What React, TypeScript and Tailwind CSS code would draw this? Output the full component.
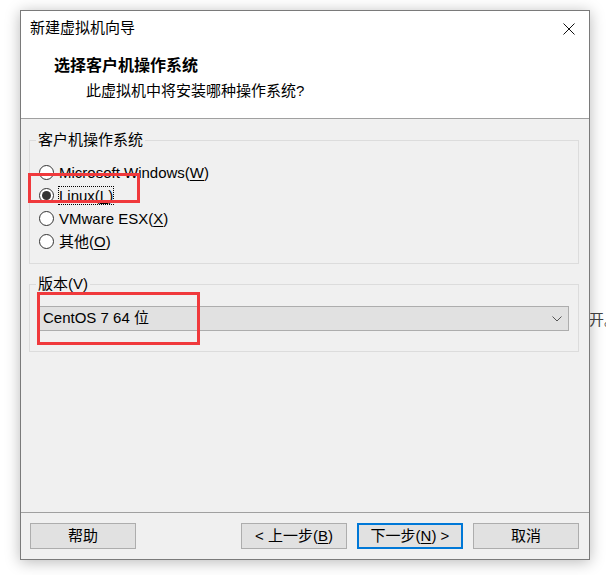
import { useState } from "react"

const font = { fontFamily: '"Liberation Sans", "Noto Sans CJK SC", sans-serif' }

function Radio({ checked, label, hot, focused }: { checked?: boolean; label: string; hot: string; focused?: boolean }) {
  return (
    <div className="flex items-center h-[23px] pl-[9px]">
      <span className="w-[15px] h-[15px] rounded-full border border-[#333333] bg-white flex items-center justify-center shrink-0">
        {checked && <span className="w-[9px] h-[9px] rounded-full bg-[#333333]" />}
      </span>
      <span
        className={`ml-[4px] leading-[17px] border border-dotted ${focused ? "border-black" : "border-transparent"}`}
      >
        {label}(<span className="underline underline-offset-2">{hot}</span>)
      </span>
    </div>
  )
}

function Button({ children, primary }: { children: React.ReactNode; primary?: boolean }) {
  return (
    <button
      className={`w-[106px] h-[26px] bg-[#e1e1e1] flex items-center justify-center text-[15px] text-black ${
        primary ? "border-2 border-[#0078d7]" : "border border-[#adadad]"
      }`}
    >
      {children}
    </button>
  )
}

export default function App() {
  const [os, setOs] = useState("linux")
  void setOs

  return (
    <div className="relative w-[606px] h-[575px] bg-white overflow-hidden text-black text-[15px]" style={font}>
      {/* text from the window behind */}
      <div className="absolute left-[589px] top-[310px] text-[15px] leading-[20px] text-[#444] whitespace-nowrap">开。</div>

      <div className="relative z-10 ml-[20px] mt-[10px] w-[570px] h-[550px] border border-[#7a7a7a] bg-[#f0f0f0] flex flex-col shadow-[0_2px_14px_rgba(0,0,0,0.28)]">
        {/* title bar + header */}
        <div className="bg-white">
          <div className="h-[35px] flex items-center justify-between pl-[9px] pr-[14px]">
            <span className="text-[15px]">新建虚拟机向导</span>
            <svg width="12" height="12" viewBox="0 0 12 12">
              <path d="M0.5 0.5 L11.5 11.5 M11.5 0.5 L0.5 11.5" stroke="#111" strokeWidth="1" fill="none" />
            </svg>
          </div>
          <div className="h-[72px] pt-[10px]">
            <div className="pl-[33px] text-[16px] font-bold leading-[20px]">选择客户机操作系统</div>
            <div className="pl-[65px] mt-[5px] leading-[20px]">此虚拟机中将安装哪种操作系统?</div>
          </div>
        </div>
        <div className="h-px bg-[#a0a0a0]" />

        {/* body */}
        <div className="flex-1 flex flex-col pl-[8px] pr-[10px] pt-[11px]">
          <fieldset className="border border-[#dcdcdc] pt-[11px] pb-[10px]">
            <legend className="ml-[6px] px-[2px] leading-[20px]">客户机操作系统</legend>
            <Radio label="Microsoft Windows" hot="W" checked={os === "windows"} />
            <Radio label="Linux" hot="L" checked={os === "linux"} focused />
            <Radio label="VMware ESX" hot="X" checked={os === "esx"} />
            <Radio label="其他" hot="O" checked={os === "other"} />
          </fieldset>

          <fieldset className="mt-[10px] border border-[#dcdcdc] pt-[12px] pb-[20px] pl-[9px] pr-[9px]">
            <legend className="ml-[-3px] px-[2px] leading-[20px]">版本(V)</legend>
            <div className="h-[25px] bg-[#e1e1e1] border border-[#adadad] flex items-center justify-between pl-[3px] pr-[6px]">
              <span>CentOS 7 64 位</span>
              <svg width="10" height="6" viewBox="0 0 10 6">
                <path d="M0.5 0.5 L5 5 L9.5 0.5" stroke="#555" strokeWidth="1" fill="none" />
              </svg>
            </div>
          </fieldset>
        </div>

        {/* footer */}
        <div className="h-px bg-[#a0a0a0]" />
        <div className="flex items-center pl-[9px] pr-[10px] pt-[10px] pb-[10px]">
          <Button>帮助</Button>
          <div className="flex-1" />
          <div className="flex gap-[10px]">
            <Button>
              &lt; 上一步(<span className="underline underline-offset-2">B</span>)
            </Button>
            <Button primary>
              下一步(<span className="underline underline-offset-2">N</span>) &gt;
            </Button>
            <Button>取消</Button>
          </div>
        </div>
      </div>

      {/* red annotation boxes */}
      <div className="absolute z-20 left-[28px] top-[173px] w-[112px] h-[30px] border-[3px] border-[#f0393c] pointer-events-none" />
      <div className="absolute z-20 left-[37px] top-[292px] w-[163px] h-[53px] border-[3px] border-[#f0393c] pointer-events-none" />
    </div>
  )
}
